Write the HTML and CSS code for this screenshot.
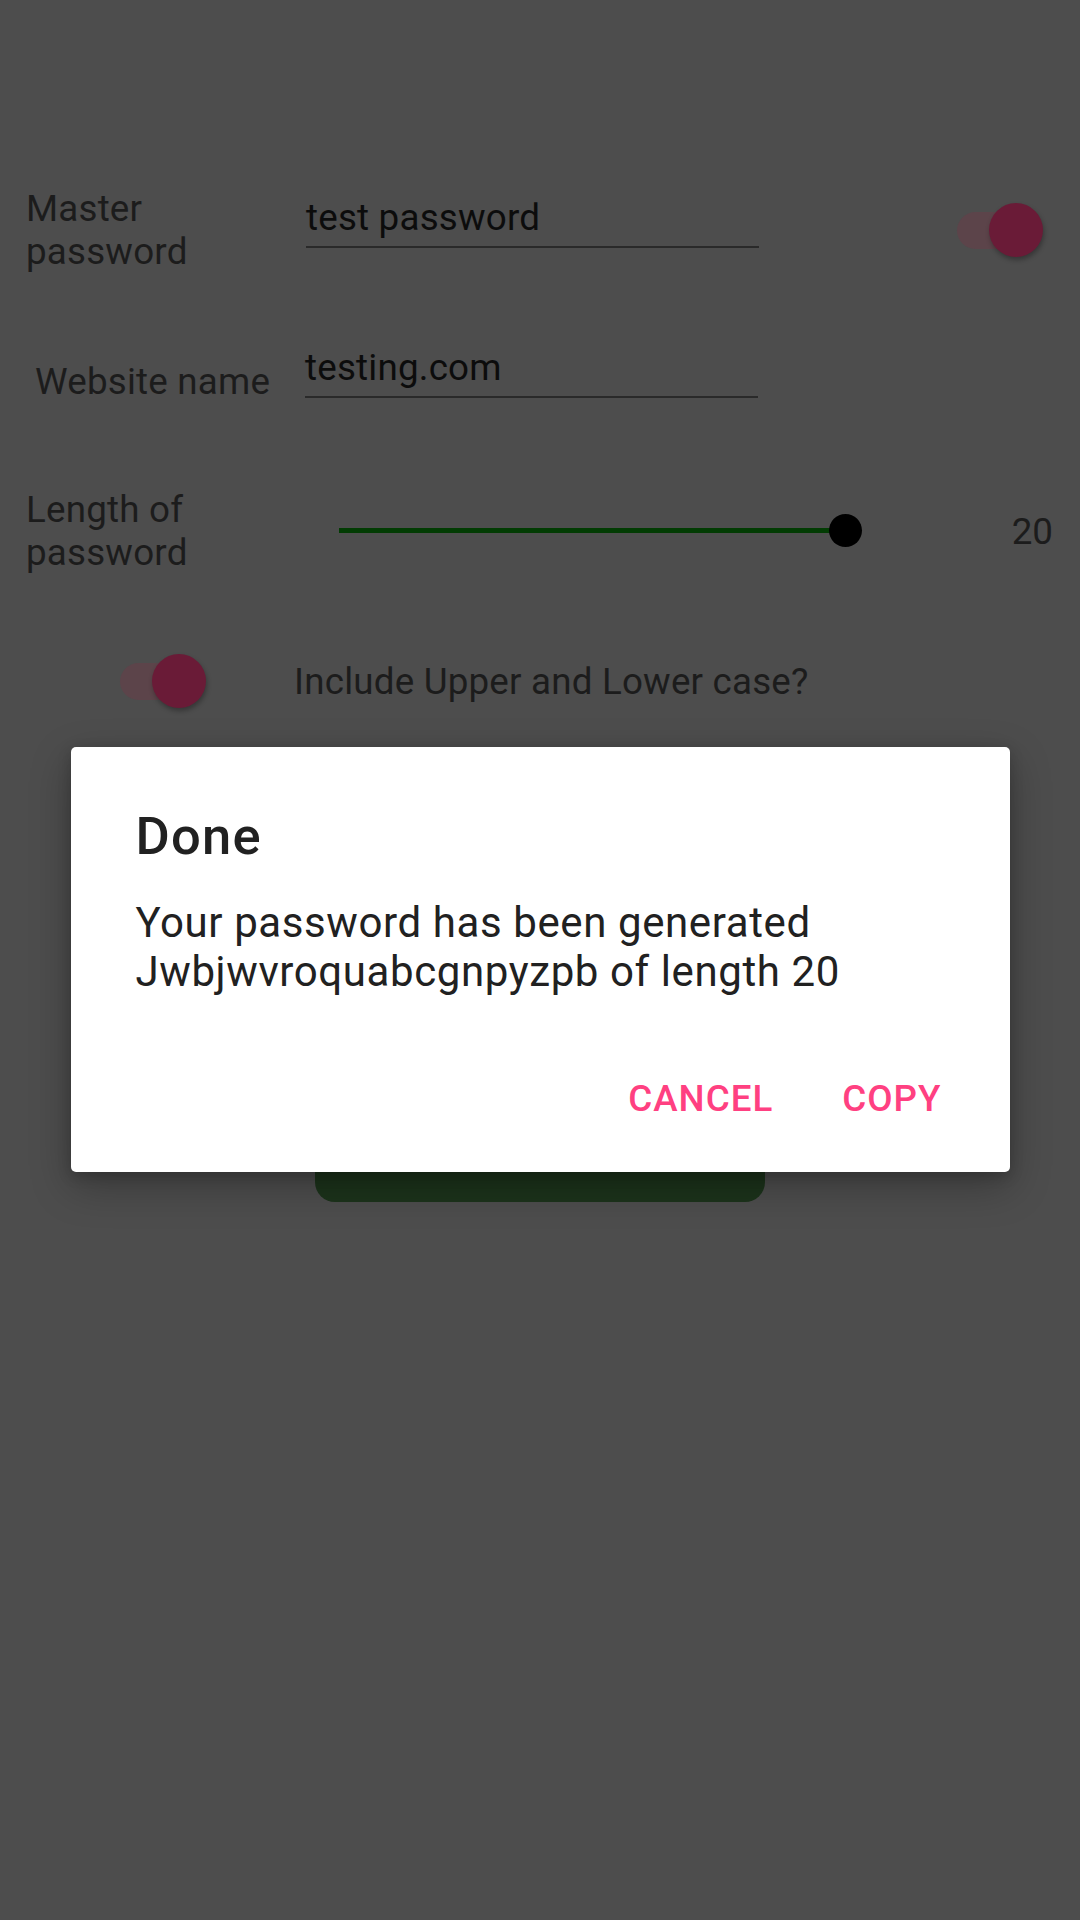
FILE: index.html
```html
<!DOCTYPE html>
<html lang="en">
<head>
<meta charset="utf-8">
<title>Password generator</title>
<link rel="stylesheet" href="styles.css">
</head>
<body>
<main class="screen">
  <div class="row row-master">
    <div class="field-label">Master password</div>
    <div class="text-input"><span class="input-value">test password</span></div>
    <div class="switch switch-master"><span class="switch-track"></span><span class="switch-thumb"></span></div>
  </div>

  <div class="row row-website">
    <div class="field-label field-label-indent">Website name</div>
    <div class="text-input"><span class="input-value">testing.com</span></div>
  </div>

  <div class="row row-length">
    <div class="field-label">Length of password</div>
    <div class="slider">
      <span class="slider-track"></span>
      <span class="slider-thumb"></span>
    </div>
    <div class="slider-value">20</div>
  </div>

  <div class="row row-case">
    <div class="switch"><span class="switch-track"></span><span class="switch-thumb"></span></div>
    <div class="option-label">Include Upper and Lower case?</div>
  </div>

  <div class="row row-action">
    <div class="generate-button"></div>
  </div>
</main>

<div class="dialog-layer">
  <section class="dialog" role="dialog">
    <h2 class="dialog-title">Done</h2>
    <p class="dialog-message">Your password has been generated<br>Jwbjwvroquabcgnpyzpb of length 20</p>
    <div class="dialog-actions">
      <button class="dialog-button">CANCEL</button>
      <button class="dialog-button">COPY</button>
    </div>
  </section>
</div>
</body>
</html>
```

FILE: styles.css
```css
html, body {
  margin: 0;
  padding: 0;
  background: #4d4d4d;
}

body {
  width: 1080px;
  height: 1920px;
  position: relative;
  overflow: hidden;
  font-family: Roboto, "Noto Sans", "Liberation Sans", sans-serif;
}

.screen {
  display: flex;
  flex-direction: column;
  padding-top: 186px;
}

.row {
  display: flex;
  align-items: flex-start;
}

.field-label {
  width: 250px;
  margin-left: 26px;
  font-size: 36.75px;
  line-height: 43px;
  color: #1c1c1c;
  letter-spacing: 0.2px;
}

.field-label-indent {
  width: 240px;
  padding-left: 9px;
}

.text-input {
  width: 453px;
  margin-left: 30px;
  padding-bottom: 7.5px;
  border-bottom: 2.5px solid #2a2a2a;
}

.input-value {
  display: block;
  font-size: 36.75px;
  line-height: 43px;
  color: #0c0c0c;
  letter-spacing: 0.2px;
}

/* row 1 */
.row-master .field-label { margin-top: 0.5px; }
.row-master .text-input { margin-top: 9.5px; }
.switch-master {
  margin-left: auto;
  margin-right: 37px;
  margin-top: 17px;
}

/* row 2 */
.row-website { margin-top: 73px; }
.row-website .field-label { margin-top: 14px; }

/* switch */
.switch {
  position: relative;
  width: 86px;
  height: 54px;
  flex-shrink: 0;
}

.switch-track {
  position: absolute;
  left: 0;
  top: 8.5px;
  width: 74px;
  height: 37px;
  border-radius: 18.5px;
  background: #5c444a;
}

.switch-thumb {
  position: absolute;
  right: 0;
  top: 0;
  width: 54px;
  height: 54px;
  border-radius: 50%;
  background: #6a1b37;
  box-shadow: 1px 3px 5px rgba(0, 0, 0, 0.3);
}

/* row 3 */
.row-length { margin-top: 85px; }

.slider {
  display: flex;
  align-items: center;
  width: 523px;
  height: 33px;
  margin-left: 63px;
  margin-top: 26px;
}

.slider-track {
  flex: 1;
  height: 5px;
  background: #023c03;
}

.slider-thumb {
  width: 33px;
  height: 33px;
  margin-left: -16.5px;
  border-radius: 50%;
  background: #000;
}

.slider-value {
  margin-left: auto;
  margin-right: 27px;
  margin-top: 22px;
  font-size: 36.75px;
  line-height: 43px;
  color: #1c1c1c;
}

/* row 4 */
.row-case {
  margin-top: 80.5px;
  padding-left: 120px;
}

.option-label {
  margin-left: 88px;
  margin-top: 5.5px;
  font-size: 36.75px;
  line-height: 43px;
  color: #1c1c1c;
  letter-spacing: 0.2px;
}

/* action button partly hidden behind the dialog */
.row-action {
  justify-content: center;
  margin-top: 368px;
}

.generate-button {
  width: 450px;
  height: 126px;
  border-radius: 20px;
  background: #1c331b;
}

/* dialog */
.dialog-layer {
  position: absolute;
  inset: 0;
  display: flex;
  justify-content: center;
  align-items: flex-start;
  padding-top: 747px;
  box-sizing: border-box;
}

.dialog {
  width: 939px;
  box-sizing: border-box;
  padding: 59px 0 26.5px 65px;
  background: #ffffff;
  border-radius: 5px;
  box-shadow: 0 14px 40px rgba(0, 0, 0, 0.28), 0 4px 14px rgba(0, 0, 0, 0.18);
}

.dialog-title {
  margin: 0;
  font-size: 52.5px;
  line-height: 61.5px;
  font-weight: 500;
  letter-spacing: 1.2px;
  color: #212121;
}

.dialog-message {
  margin: 30px 0 0;
  font-size: 42px;
  line-height: 49.2px;
  letter-spacing: 0.6px;
  color: #212121;
}

.dialog-actions {
  display: flex;
  justify-content: flex-end;
  gap: 69px;
  margin-top: 56px;
  padding-right: 68px;
}

.dialog-button {
  border: 0;
  background: transparent;
  padding: 25.5px 0;
  margin: 0;
  font-family: inherit;
  font-size: 36.75px;
  line-height: 43px;
  font-weight: 500;
  letter-spacing: 1px;
  color: #ff4081;
}
```
